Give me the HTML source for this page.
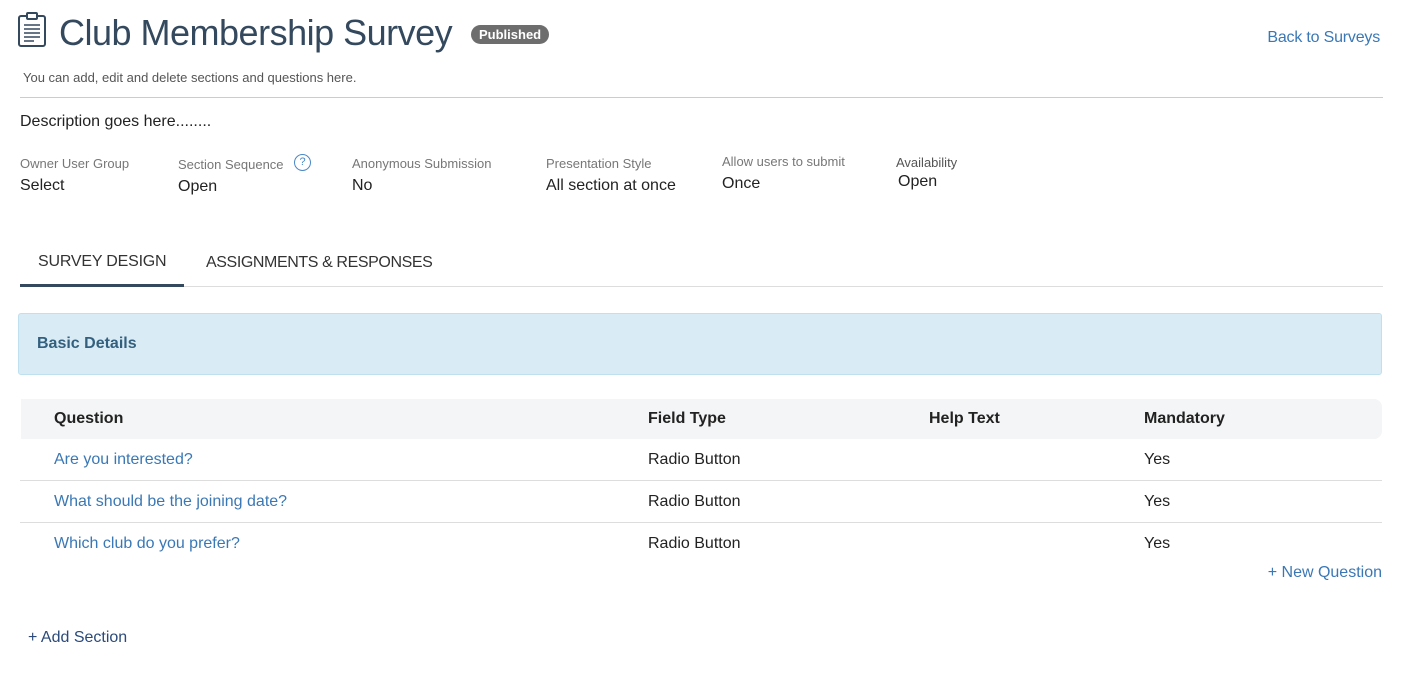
<!DOCTYPE html>
<html><head><meta charset="utf-8"><style>
body{margin:0;width:1413px;height:674px;background:#fff;font-family:"Liberation Sans",sans-serif;position:relative;overflow:hidden;color:#222}
.a{position:absolute;white-space:nowrap}
.lbl{font-size:13px;color:#777}
.val{font-size:16px;color:#222}
.link{color:#3a78b5}
.row{position:absolute;left:20px;width:1362px;height:1px;background:#ddd}
</style></head><body>
<svg class="a" style="left:17px;top:11px" width="32" height="36" viewBox="0 0 32 36">
<rect x="2" y="5" width="26" height="30" rx="2" fill="none" stroke="#34495e" stroke-width="2"/>
<rect x="10" y="2" width="10" height="6" rx="1" fill="#fff" stroke="#34495e" stroke-width="2"/>
<path d="M7 14h16M7 18h16M7 22h16M7 26h16M7 30h10" stroke="#34495e" stroke-width="1.6"/>
</svg>
<div class="a" style="left:59px;top:12px;font-size:36px;color:#34495e;letter-spacing:-0.5px">Club Membership Survey</div>
<div class="a" style="left:471px;top:25px;background:#6d6d6d;color:#fff;font-size:13px;font-weight:bold;border-radius:10px;padding:2px 8px">Published</div>
<div class="a link" style="right:33px;top:29px;font-size:16px;letter-spacing:-0.2px">Back to Surveys</div>
<div class="a" style="left:23px;top:70px;font-size:13px;color:#555">You can add, edit and delete sections and questions here.</div>
<div class="a" style="left:20px;top:97px;width:1363px;height:1px;background:#ccc"></div>
<div class="a" style="left:20px;top:113px;font-size:16px">Description goes here........</div>
<div class="a lbl" style="left:20px;top:156px">Owner User Group</div><div class="a val" style="left:20px;top:177px">Select</div>
<div class="a lbl" style="left:178px;top:157px">Section Sequence</div>
<div class="a" style="left:294px;top:154px;width:15px;height:15px;border:1px solid #4a88c8;border-radius:50%;color:#4a88c8;font-size:11px;text-align:center;line-height:15px">?</div>
<div class="a val" style="left:178px;top:178px">Open</div>
<div class="a lbl" style="left:352px;top:156px">Anonymous Submission</div><div class="a val" style="left:352px;top:177px">No</div>
<div class="a lbl" style="left:546px;top:156px">Presentation Style</div><div class="a val" style="left:546px;top:177px">All section at once</div>
<div class="a lbl" style="left:722px;top:154px">Allow users to submit</div><div class="a val" style="left:722px;top:175px">Once</div>
<div class="a lbl" style="left:896px;top:155px;color:#555">Availability</div><div class="a val" style="left:898px;top:173px">Open</div>
<div class="a" style="left:38px;top:253px;font-size:16px;color:#333;letter-spacing:-0.2px">SURVEY DESIGN</div>
<div class="a" style="left:206px;top:254px;font-size:16px;color:#333;letter-spacing:-0.4px">ASSIGNMENTS &amp; RESPONSES</div>
<div class="a" style="left:20px;top:286px;width:1363px;height:1px;background:#ddd"></div>
<div class="a" style="left:20px;top:284px;width:164px;height:3px;background:#34495e"></div>
<div class="a" style="left:18px;top:313px;width:1362px;height:60px;background:#d9ecf5;border:1px solid #bfe0ee;border-radius:3px"></div>
<div class="a" style="left:37px;top:335px;font-size:16px;font-weight:bold;color:#34607f">Basic Details</div>
<div class="a" style="left:21px;top:399px;width:1361px;height:40px;background:#f4f5f6;border-radius:0 8px 8px 0"></div>
<div class="a" style="left:54px;top:410px;font-size:16px;font-weight:bold">Question</div>
<div class="a" style="left:648px;top:410px;font-size:16px;font-weight:bold">Field Type</div>
<div class="a" style="left:929px;top:410px;font-size:16px;font-weight:bold">Help Text</div>
<div class="a" style="left:1144px;top:410px;font-size:16px;font-weight:bold">Mandatory</div>
<div class="a link" style="left:54px;top:451px;font-size:16px">Are you interested?</div>
<div class="a val" style="left:648px;top:451px">Radio Button</div><div class="a val" style="left:1144px;top:451px">Yes</div>
<div class="row" style="top:480px"></div>
<div class="a link" style="left:54px;top:493px;font-size:16px">What should be the joining date?</div>
<div class="a val" style="left:648px;top:493px">Radio Button</div><div class="a val" style="left:1144px;top:493px">Yes</div>
<div class="row" style="top:522px"></div>
<div class="a link" style="left:54px;top:535px;font-size:16px">Which club do you prefer?</div>
<div class="a val" style="left:648px;top:535px">Radio Button</div><div class="a val" style="left:1144px;top:535px">Yes</div>
<div class="a link" style="right:31px;top:564px;font-size:16px">+ New Question</div>
<div class="a" style="left:28px;top:629px;font-size:16px;color:#2b4a7a">+ Add Section</div>
</body></html>
